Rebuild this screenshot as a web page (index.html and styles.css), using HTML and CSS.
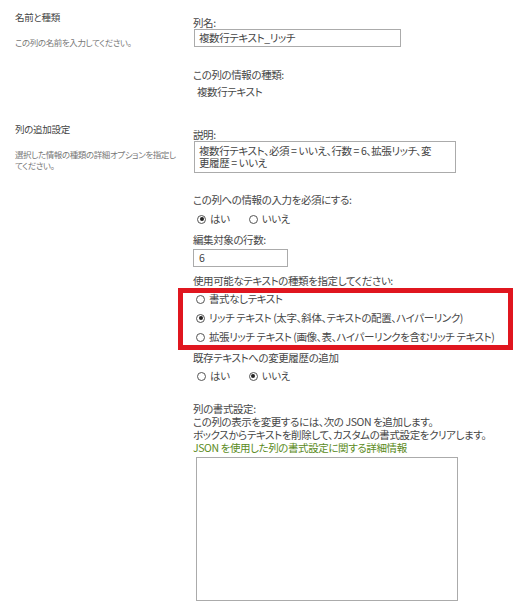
FILE: index.html
```html
<!DOCTYPE html>
<html lang="ja">
<head>
<meta charset="utf-8">
<title>列の設定</title>
<link rel="stylesheet" href="styles.css">
</head>
<body>
<div class="page">
  <section class="group first">
    <div class="side">
      <h3 class="side-title">名前と種類</h3>
      <p class="side-desc">この列の名前を入力してください。</p>
    </div>
    <div class="fields">
      <div class="label">列名:</div>
      <div class="box name-box">複数行テキスト_リッチ</div>
      <div class="label gap-22">この列の情報の種類:</div>
      <div class="value">複数行テキスト</div>
    </div>
  </section>

  <section class="group second">
    <div class="side">
      <h3 class="side-title">列の追加設定</h3>
      <p class="side-desc">選択した情報の種類の詳細オプションを指定してください。</p>
    </div>
    <div class="fields">
      <div class="label">説明:</div>
      <div class="box desc-box">複数行テキスト、必須 = いいえ、行数 = 6、拡張リッチ、変更履歴 = いいえ</div>

      <div class="label gap-21">この列への情報の入力を必須にする:</div>
      <div class="radios gap-7">
        <span class="opt"><span class="radio on"></span>はい</span>
        <span class="opt"><span class="radio"></span>いいえ</span>
      </div>

      <div class="label gap-9">編集対象の行数:</div>
      <div class="box num-box">6</div>

      <div class="label gap-8">使用可能なテキストの種類を指定してください:</div>
      <div class="highlight">
        <div class="opt-row"><span class="radio"></span>書式なしテキスト</div>
        <div class="opt-row"><span class="radio on"></span>リッチ テキスト (太字、斜体、テキストの配置、ハイパーリンク)</div>
        <div class="opt-row"><span class="radio"></span>拡張リッチ テキスト (画像、表、ハイパーリンクを含むリッチ テキスト)</div>
      </div>

      <div class="label gap-2">既存テキストへの変更履歴の追加</div>
      <div class="radios gap-6">
        <span class="opt"><span class="radio"></span>はい</span>
        <span class="opt"><span class="radio on"></span>いいえ</span>
      </div>

      <div class="format">
        <div class="line">列の書式設定:</div>
        <div class="line">この列の表示を変更するには、次の JSON を追加します。</div>
        <div class="line">ボックスからテキストを削除して、カスタムの書式設定をクリアします。</div>
        <div class="line link">JSON を使用した列の書式設定に関する詳細情報</div>
      </div>
      <div class="box json-box"></div>
    </div>
  </section>
</div>
</body>
</html>
```

FILE: styles.css
```css
html, body {
  margin: 0;
  padding: 0;
  background: #ffffff;
}

body {
  font-family: "Noto Sans CJK JP", "Noto Sans", sans-serif;
  font-feature-settings: "palt";
  color: #474747;
  font-size: 10.5px;
  letter-spacing: -0.4px;
}

.page {
  padding: 11px 0 0 15px;
}

.group {
  display: flex;
  gap: 15px;
}

.group.second {
  margin-top: 25px;
}

.side {
  width: 163px;
  flex: none;
}

.side-title {
  margin: 0;
  font-size: 9.5px;
  font-weight: normal;
  line-height: 12px;
  letter-spacing: -0.3px;
  color: #444444;
}

.side-desc {
  margin: 14px 0 0;
  font-size: 8.5px;
  line-height: 11px;
  letter-spacing: -0.4px;
  color: #777777;
}

.fields {
  padding-top: 6px;
  display: flex;
  flex-direction: column;
  align-items: flex-start;
}

.label {
  line-height: 12px;
  white-space: nowrap;
}

.value {
  margin-top: 5px;
  padding-left: 4px;
  line-height: 12px;
}

.box {
  box-sizing: border-box;
  border: 1px solid #ababab;
  background: #ffffff;
  color: #444444;
}

.name-box {
  width: 207px;
  height: 18px;
  line-height: 16px;
  padding-left: 4px;
  margin-left: 1px;
}

.desc-box {
  width: 262px;
  height: 32px;
  margin-left: 1px;
  padding: 3px 18px 0 4px;
  line-height: 12px;
  word-break: break-all;
}

.num-box {
  width: 95px;
  height: 18px;
  margin-top: 3px;
  line-height: 16px;
  padding-left: 5px;
}

.gap-2 { margin-top: 2px; }
.gap-6 { margin-top: 6px; }
.gap-7 { margin-top: 7px; }
.gap-8 { margin-top: 8px; }
.gap-9 { margin-top: 9px; }
.gap-21 { margin-top: 21px; }
.gap-22 { margin-top: 22px; }

.radios {
  display: flex;
  gap: 19px;
  padding-left: 4px;
  line-height: 12px;
}

.opt {
  display: inline-flex;
  align-items: center;
  gap: 4px;
}

.radio {
  box-sizing: border-box;
  width: 9px;
  height: 9px;
  border: 1px solid #555555;
  border-radius: 50%;
  flex: none;
  position: relative;
  background: #ffffff;
}

.radio.on::after {
  content: "";
  position: absolute;
  left: 1.5px;
  top: 1.5px;
  width: 4px;
  height: 4px;
  border-radius: 50%;
  background: #222222;
}

.highlight {
  box-sizing: border-box;
  width: 335px;
  margin: 1px 0 0 -15px;
  border: 5px solid #e0161f;
  padding: 0 0 2px 13px;
  display: flex;
  flex-direction: column;
  gap: 7px;
}

.opt-row {
  display: flex;
  align-items: center;
  gap: 4px;
  line-height: 12px;
  white-space: nowrap;
}

.format {
  margin-top: 20px;
}

.format .line {
  line-height: 13px;
  white-space: nowrap;
}

.format .link {
  color: #5a8a22;
}

.json-box {
  width: 262px;
  height: 144px;
  margin: 3px 0 0 3px;
}
```
